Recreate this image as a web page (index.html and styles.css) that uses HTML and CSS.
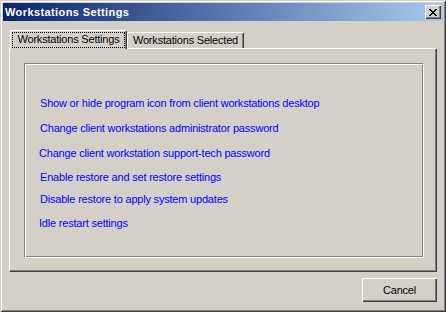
FILE: index.html
```html
<!DOCTYPE html>
<html lang="en">
<head>
    <meta charset="UTF-8">
    <title>Workstations Settings</title>
    <link rel="stylesheet" href="styles.css">
</head>
<body>
    <div class="window">
        <div class="titlebar">
            <span class="title">Workstations Settings</span>
            <button class="close" aria-label="Close">
                <svg width="8" height="7" viewBox="0 0 8 7" shape-rendering="crispEdges">
                    <path fill="#000" d="M0 0h2v1H0z M6 0h2v1H6z M1 1h2v1H1z M5 1h2v1H5z M2 2h4v1H2z M3 3h2v1H3z M2 4h4v1H2z M1 5h2v1H1z M5 5h2v1H5z M0 6h2v1H0z M6 6h2v1H6z"/>
                </svg>
            </button>
        </div>

        <div class="content">
            <div class="tabs">
                <div class="tab active"><span class="focus">Workstations Settings</span></div>
                <div class="tab">Workstations Selected</div>
            </div>

            <div class="panel">
                <div class="group">
                    <a href="#" class="link">Show or hide program icon from client workstations desktop</a>
                    <a href="#" class="link gap-12">Change client workstations administrator password</a>
                    <a href="#" class="link gap-12 shift">Change client workstation support-tech password</a>
                    <a href="#" class="link gap-11">Enable restore and set restore settings</a>
                    <a href="#" class="link gap-9">Disable restore to apply system updates</a>
                    <a href="#" class="link gap-11 shift">Idle restart settings</a>
                </div>
            </div>

            <div class="footer">
                <button class="btn">Cancel</button>
            </div>
        </div>
    </div>
</body>
</html>
```

FILE: styles.css
```css
body {
    margin: 0;
    font-family: 'Liberation Sans', Arial, sans-serif;
    font-size: 11px;
    color: #000;
    background-color: #d4d0c8;
}
.window {
    width: 446px;
    height: 312px;
    box-sizing: border-box;
    padding: 3px;
    background-color: #d4d0c8;
    box-shadow: inset 1px 1px #d4d0c8, inset -1px -1px #404040, inset 2px 2px #fff, inset -2px -2px #808080;
}
.titlebar {
    height: 18px;
    display: flex;
    align-items: center;
    padding: 0 2px;
    background: linear-gradient(to right, #0a246a, #a6caf0);
}
.title {
    flex: 1;
    color: #fff;
    font-weight: bold;
    letter-spacing: 0.4px;
}
.close {
    width: 16px;
    height: 14px;
    box-sizing: border-box;
    padding: 0;
    border: none;
    display: flex;
    align-items: center;
    justify-content: center;
    background-color: #d4d0c8;
    box-shadow: inset 1px 1px #fff, inset -1px -1px #404040, inset -2px -2px #808080;
}
.content {
    padding: 9px 6px 0;
}
.tabs {
    display: flex;
    align-items: flex-end;
    padding-left: 1px;
}
.tab {
    width: 117px;
    height: 16px;
    box-sizing: border-box;
    border-top: 1px solid #fff;
    border-left: 1px solid #fff;
    border-right: 1px solid #404040;
    border-radius: 2px 2px 0 0;
    box-shadow: inset -1px 0 #808080;
    text-align: center;
    line-height: 15px;
    letter-spacing: -0.2px;
    white-space: nowrap;
}
.tab.active {
    height: 19px;
    margin-bottom: -1px;
    position: relative;
    z-index: 1;
    background-color: #d4d0c8;
}
.focus {
    display: block;
    margin: 1px 1px 0 1px;
    height: 16px;
    box-sizing: border-box;
    border: 1px dotted #000;
    line-height: 13px;
}
.panel {
    position: relative;
    border-top: 1px solid #fff;
    border-left: 1px solid #fff;
    border-right: 1px solid #404040;
    border-bottom: 1px solid #404040;
    box-shadow: inset -1px -1px #808080;
    padding: 14px 12px 13px 14px;
}
.group {
    height: 195px;
    box-sizing: border-box;
    border-top: 1px solid #808080;
    border-left: 1px solid #808080;
    border-bottom: 1px solid #fff;
    border-right: 1px solid #fff;
    box-shadow: inset 1px 1px #fff, inset -1px -1px #808080;
    padding: 33px 0 0 15px;
}
.link {
    display: block;
    width: max-content;
    color: #0000ff;
    text-decoration: none;
    line-height: 13px;
    letter-spacing: -0.2px;
}
.link.gap-12 {
    margin-top: 12px;
}
.link.gap-11 {
    margin-top: 11px;
}
.link.gap-9 {
    margin-top: 9px;
}
.link.shift {
    margin-left: -1px;
}
.footer {
    display: flex;
    justify-content: flex-end;
    padding-top: 6px;
}
.btn {
    width: 75px;
    height: 24px;
    border: none;
    padding: 0;
    font: inherit;
    letter-spacing: -0.2px;
    color: #000;
    background-color: #d4d0c8;
    box-shadow: inset 1px 1px #fff, inset -1px -1px #404040, inset -2px -2px #808080;
}
```
